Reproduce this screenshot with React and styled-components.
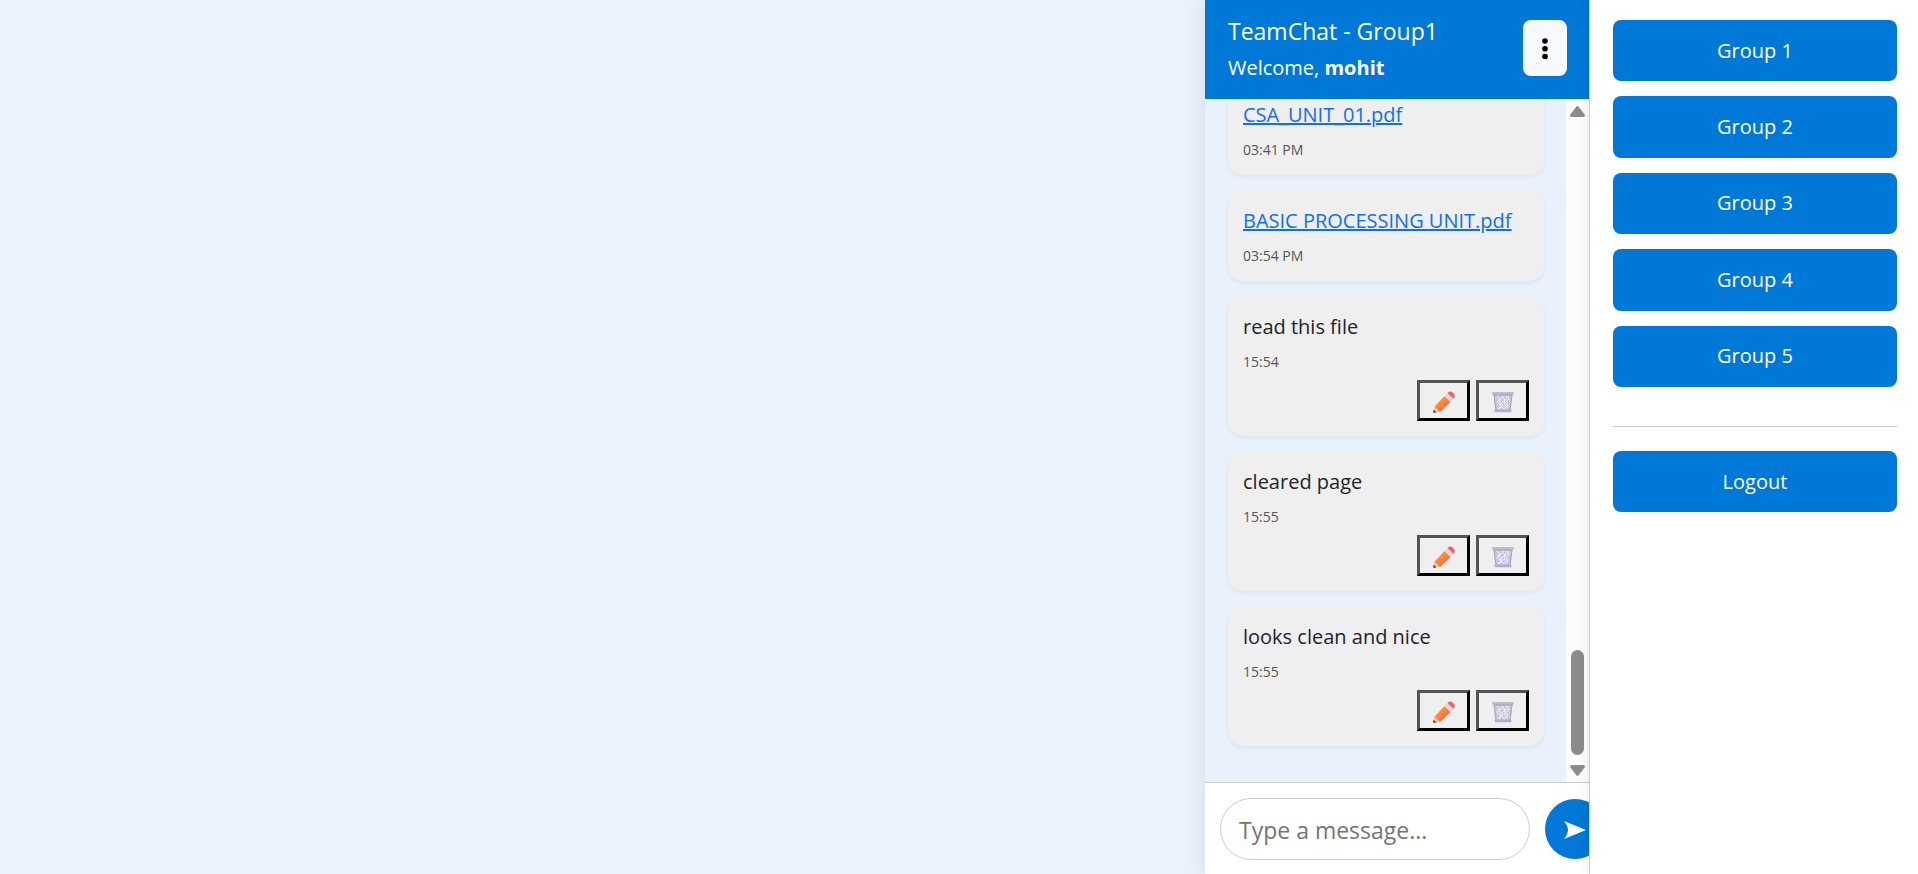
import React from "react";
import styled, { createGlobalStyle } from "styled-components";

const GlobalStyle = createGlobalStyle`
  * { box-sizing: border-box; }
  body {
    margin: 0;
    background: #eaf2fd;
    color: #212529;
    font-family: "Segoe UI", "Open Sans", "Noto Sans", sans-serif;
    font-size: 20px;
    line-height: 30px;
  }
  button, input { font: inherit; color: inherit; }
`;

const Page = styled.div`
  display: flex;
  justify-content: flex-end;
  height: 100vh;
  overflow: hidden;
`;

const Chat = styled.main`
  flex: none;
  display: flex;
  flex-direction: column;
  width: 384px;
  background: #e9f1fc;
  box-shadow: 0 0 20px rgba(0, 0, 0, 0.1);
`;

const Header = styled.header`
  flex: none;
  display: flex;
  align-items: center;
  justify-content: space-between;
  height: 99px;
  padding: 0 22px 3px 23px;
  background: #0078d7;
  color: #fff;
`;

const Title = styled.h1`
  margin: 2px 0 6px;
  font-size: 23px;
  font-weight: 400;
  line-height: 32px;
`;

const Welcome = styled.p`
  margin: 0;
`;

const MenuButton = styled.button`
  display: grid;
  place-items: center;
  width: 44px;
  height: 56px;
  padding: 2px 0 0;
  border: 0;
  border-radius: 8px;
  background: #f8f9fc;
  color: #000;
`;

const Scroller = styled.div`
  flex: 1;
  display: flex;
  min-height: 0;
`;

const Messages = styled.ul`
  flex: 1;
  display: flex;
  flex-direction: column;
  justify-content: flex-end;
  gap: 15px;
  margin: 0;
  padding: 0 22px 36px 23px;
  overflow: hidden;
  list-style: none;
`;

const Bubble = styled.li`
  flex: none;
  padding: 15px;
  border-radius: 15px;
  background: #efefef;
  box-shadow: 0 2px 5px rgba(0, 0, 0, 0.06);
`;

const MessageText = styled.div`
  margin-bottom: 8px;
  line-height: 32px;
  white-space: nowrap;
`;

const FileLink = styled.a`
  color: #0d6efd;
  text-decoration: underline;
  text-decoration-thickness: 2px;
`;

const Time = styled.time`
  display: block;
  color: #555;
  font-size: 14px;
  line-height: 21px;
`;

const Actions = styled.div`
  display: flex;
  justify-content: flex-end;
  gap: 6px;
  margin-top: 8px;
`;

const ActionButton = styled.button`
  display: grid;
  place-items: center;
  width: 53px;
  height: 41px;
  padding: 2px 0 0;
  border: 3px outset #000;
  background: transparent;
`;

const ScrollTrack = styled.div`
  flex: none;
  display: flex;
  flex-direction: column;
  align-items: center;
  width: 23px;
  padding: 7px 0 6px;
  background: #fcfcfc;
`;

const ScrollThumb = styled.div`
  width: 13px;
  height: 105px;
  margin: auto 0 10px;
  border-radius: 7px;
  background: #8b8b8b;
`;

const Composer = styled.form`
  flex: none;
  display: flex;
  align-items: center;
  gap: 15px;
  padding: 15px 15px 14px;
  overflow: hidden;
  border-top: 1px solid #ccc;
  background: #fff;
`;

const MessageInput = styled.input`
  flex: none;
  width: 310px;
  height: 62px;
  padding: 2px 18px 0;
  border: 1px solid #ccc;
  border-radius: 31px;
  background: #fff;
  font-size: 23px;
  outline: 0;
  &::placeholder { color: #757575; opacity: 1; }
`;

const SendButton = styled.button`
  flex: none;
  display: grid;
  place-items: center;
  width: 60px;
  height: 60px;
  padding: 2px 0 0;
  border: 0;
  border-radius: 50%;
  background: #0078d7;
  color: #fff;
`;

const Sidebar = styled.aside`
  position: relative;
  flex: none;
  width: 329px;
  padding: 20px 21px 20px 23px;
  border-left: 1px solid #ccc;
  background: #fff;
  box-shadow: -2px 0 10px rgba(0, 0, 0, 0.08);
`;

const GroupList = styled.nav`
  display: grid;
  grid-auto-rows: 1fr;
  gap: 15px;
  height: 367px;
`;

const SideButton = styled.button`
  width: 100%;
  min-height: 61px;
  padding: 0;
  border: 0;
  border-radius: 8px;
  background: #0078d7;
  color: #fff;
`;

const Divider = styled.hr`
  height: 1px;
  margin: 39px 0 24px;
  border: 0;
  background: #c8c8c8;
`;

const Pencil = () => (
  <svg width="22" height="22" viewBox="0 0 22 22" aria-hidden="true">
    <defs>
      <linearGradient id="wood" x1="0" y1="0" x2="1" y2="1">
        <stop offset="0.2" stopColor="#ffa04a" />
        <stop offset="0.8" stopColor="#f4622d" />
      </linearGradient>
    </defs>
    <path d="M.5 21.5 1.5 15.5 7 21Z" fill="#e8c0a8" />
    <path d="M.3 21.8V18.8L3.5 21.5Z" fill="#43293f" />
    <path d="M1.5 15.5 11.5 5 17.5 11 7 21Z" fill="url(#wood)" />
    <path d="M11.5 5 14.5 2 20.5 8 17.5 11Z" fill="#ddd7ea" />
    <path d="M14.5 2 16 .8Q18 0 20.2 2T21.5 6L20.5 8Z" fill="#f8605a" />
  </svg>
);

const Trash = () => (
  <svg width="22" height="22" viewBox="0 0 22 22" aria-hidden="true">
    <path d="M1.5 3H20.5L18.5 20H3.5Z" fill="#cbc7dc" />
    <path
      d="M5 5 8 8 5 11 9 15 6 18M9 5 13 9 8 14 12 18M14 5 17 8 12 13 16 17M17 5 12 10 16 14 12 18M12 5 7 10 11 14 7 18"
      fill="none"
      stroke="#f3f1f8"
      strokeWidth="1"
    />
    <path d="M2 4 4 19M20 4 18 19" stroke="#a7a1bd" strokeWidth="1" />
    <rect x="0" y="1" width="22" height="2.6" rx="1" fill="#bdbdc3" />
    <path d="M1.5 4H20.5" stroke="#a19ab4" strokeWidth="1" />
    <rect x="2.5" y="18.5" width="17" height="2.8" rx="1" fill="#b3adca" />
  </svg>
);

const files = [
  { name: "CSA_UNIT_01.pdf", time: "03:41 PM" },
  { name: "BASIC PROCESSING UNIT.pdf", time: "03:54 PM" },
];

const notes = [
  { text: "read this file", time: "15:54" },
  { text: "cleared page", time: "15:55" },
  { text: "looks clean and nice", time: "15:55" },
];

export default function App() {
  return (
    <>
      <GlobalStyle />
      <Page>
        <Chat>
          <Header>
            <div>
              <Title>TeamChat - Group1</Title>
              <Welcome>
                Welcome, <strong>mohit</strong>
              </Welcome>
            </div>
            <MenuButton type="button" aria-label="Menu">
              <svg width="6" height="22" viewBox="0 0 6 22" aria-hidden="true">
                <circle cx="3" cy="3" r="2.8" />
                <circle cx="3" cy="10.8" r="2.8" />
                <circle cx="3" cy="18.5" r="2.8" />
              </svg>
            </MenuButton>
          </Header>
          <Scroller>
            <Messages>
              {files.map((file) => (
                <Bubble key={file.name}>
                  <MessageText>
                    <FileLink href="#file">{file.name}</FileLink>
                  </MessageText>
                  <Time>{file.time}</Time>
                </Bubble>
              ))}
              {notes.map((note) => (
                <Bubble key={note.text}>
                  <MessageText>{note.text}</MessageText>
                  <Time>{note.time}</Time>
                  <Actions>
                    <ActionButton type="button" aria-label="Edit">
                      <Pencil />
                    </ActionButton>
                    <ActionButton type="button" aria-label="Delete">
                      <Trash />
                    </ActionButton>
                  </Actions>
                </Bubble>
              ))}
            </Messages>
            <ScrollTrack aria-hidden="true">
              <svg width="15" height="11" viewBox="0 0 15 11" fill="#8b8b8b">
                <path d="M6.3.7Q7.5-.6 8.7.7L14.6 8.5Q15.5 10.8 13.3 11H1.7Q-.5 10.8.4 8.5Z" />
              </svg>
              <ScrollThumb />
              <svg width="15" height="11" viewBox="0 0 15 11" fill="#8b8b8b">
                <path d="M6.3 10.3Q7.5 11.6 8.7 10.3L14.6 2.5Q15.5.2 13.3 0H1.7Q-.5.2.4 2.5Z" />
              </svg>
            </ScrollTrack>
          </Scroller>
          <Composer>
            <MessageInput type="text" placeholder="Type a message..." aria-label="Message" />
            <SendButton type="button" aria-label="Send">
              <svg width="22" height="18" viewBox="0 0 22 18" fill="currentColor" aria-hidden="true">
                <path d="M0 0 22 9 0 18Q4 13 4 9T0 0Z" />
              </svg>
            </SendButton>
          </Composer>
        </Chat>
        <Sidebar>
          <GroupList aria-label="Groups">
            {[1, 2, 3, 4, 5].map((n) => (
              <SideButton type="button" key={n}>
                Group {n}
              </SideButton>
            ))}
          </GroupList>
          <Divider />
          <SideButton type="button">Logout</SideButton>
        </Sidebar>
      </Page>
    </>
  );
}
